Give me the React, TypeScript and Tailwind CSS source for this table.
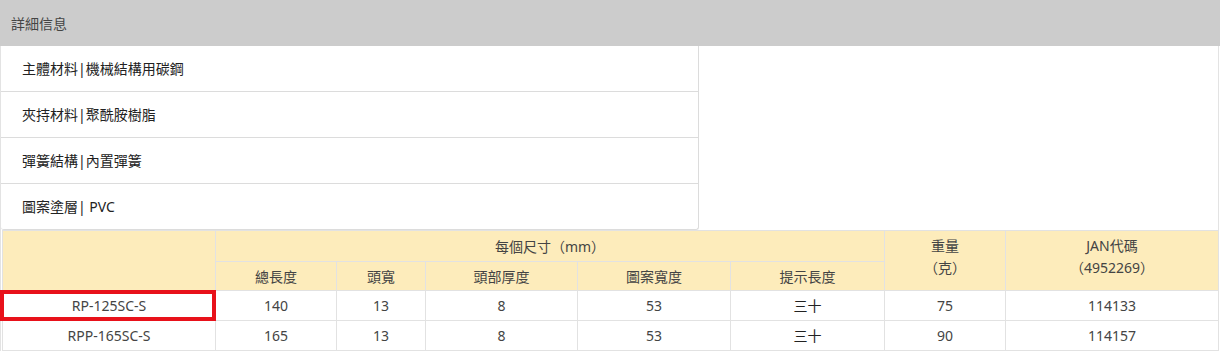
const details = [
  "主體材料|機械結構用碳鋼",
  "夾持材料|聚酰胺樹脂",
  "彈簧結構|內置彈簧",
  "圖案塗層| PVC",
];

const rows = [
  { code: "RP-125SC-S", len: "140", head: "13", thick: "8", pat: "53", tip: "三十", weight: "75", jan: "114133", active: true },
  { code: "RPP-165SC-S", len: "165", head: "13", thick: "8", pat: "53", tip: "三十", weight: "90", jan: "114157", active: false },
];

const cell = "border border-[#e2e2e2] text-center align-middle p-0";

export default function App() {
  return (
    <div
      className="w-[1220px] bg-white text-[14px] text-[#333]"
      style={{ fontFamily: '"Noto Sans", "Noto Sans CJK TC", sans-serif' }}
    >
      {/* Header */}
      <div className="h-[46px] bg-[#cccccc] flex items-center pl-[11px] text-[#444]">詳細信息</div>

      <div className="w-[1219px] border-x border-[#e3e3e3]">
        {/* Detail list */}
        <div className="w-[698px] border-r border-b border-[#dcdcdc] rounded-b-[3px]">
          {details.map((d, i) => (
            <div
              key={d}
              className={`flex items-center pl-[21px] text-[#222] ${i < details.length - 1 ? "h-[46px] border-b border-[#dcdcdc]" : "h-[45px]"}`}
            >
              {d}
            </div>
          ))}
        </div>

        {/* Spec table */}
        <table className="ml-[1px] w-[1216px] border-collapse table-fixed text-[#444]">
          <colgroup>
            <col className="w-[213px]" />
            <col className="w-[121px]" />
            <col className="w-[89px]" />
            <col className="w-[152px]" />
            <col className="w-[153px]" />
            <col className="w-[154px]" />
            <col className="w-[121px]" />
            <col className="w-[213px]" />
          </colgroup>
          <thead className="bg-[#fdecbb]">
            <tr className="h-[31px]">
              <th rowSpan={2} className={`${cell} font-normal`} />
              <th colSpan={5} className={`${cell} font-normal`}>每個尺寸（mm）</th>
              <th rowSpan={2} className={`${cell} font-normal align-top pt-[4px] leading-[22px]`}>
                重量
                <br />
                （克）
              </th>
              <th rowSpan={2} className={`${cell} font-normal align-top pt-[4px] leading-[22px]`}>
                JAN代碼
                <br />
                （4952269）
              </th>
            </tr>
            <tr className="h-[29px]">
              {["總長度", "頭寬", "頭部厚度", "圖案寬度", "提示長度"].map((h) => (
                <th key={h} className={`${cell} font-normal`}>{h}</th>
              ))}
            </tr>
          </thead>
          <tbody>
            {rows.map((r) => (
              <tr key={r.code} className="h-[30px]">
                <td className={`${cell} relative`}>
                  {r.code}
                  {r.active && (
                    <span className="absolute -left-[3px] -top-[1px] -right-[1px] -bottom-[1px] border-[4px] border-[#e8111a] pointer-events-none" />
                  )}
                </td>
                <td className={cell}>{r.len}</td>
                <td className={cell}>{r.head}</td>
                <td className={cell}>{r.thick}</td>
                <td className={cell}>{r.pat}</td>
                <td className={`${cell} text-[#222]`}>{r.tip}</td>
                <td className={cell}>{r.weight}</td>
                <td className={cell}>{r.jan}</td>
              </tr>
            ))}
          </tbody>
        </table>
      </div>
    </div>
  );
}
